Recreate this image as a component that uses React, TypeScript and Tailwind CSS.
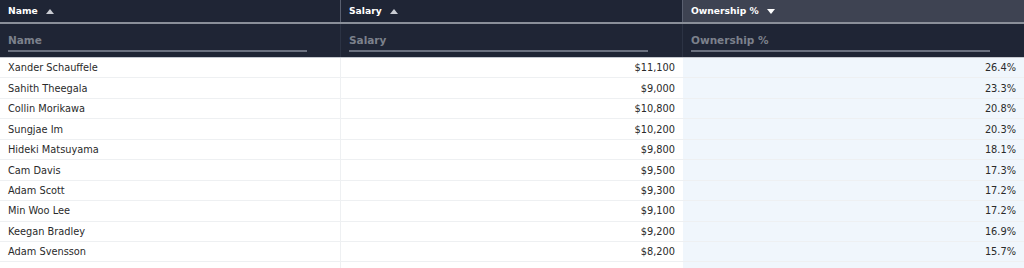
import React from "react";

const rows: [string, string, string][] = [
  ["Xander Schauffele", "$11,100", "26.4%"],
  ["Sahith Theegala", "$9,000", "23.3%"],
  ["Collin Morikawa", "$10,800", "20.8%"],
  ["Sungjae Im", "$10,200", "20.3%"],
  ["Hideki Matsuyama", "$9,800", "18.1%"],
  ["Cam Davis", "$9,500", "17.3%"],
  ["Adam Scott", "$9,300", "17.2%"],
  ["Min Woo Lee", "$9,100", "17.2%"],
  ["Keegan Bradley", "$9,200", "16.9%"],
  ["Adam Svensson", "$8,200", "15.7%"],
  ["", "", ""],
];

const Up = () => (
  <svg width="8" height="5" viewBox="0 0 8 5" className="ml-[8px]">
    <path d="M0 5 L4 0 L8 5 Z" fill="#c9ccd3" />
  </svg>
);
const Down = () => (
  <svg width="8" height="5" viewBox="0 0 8 5" className="ml-[8px]">
    <path d="M0 0 L4 5 L8 0 Z" fill="#ffffff" />
  </svg>
);

export default function App() {
  const font = { fontFamily: '"DejaVu Sans", Verdana, sans-serif' };
  return (
    <div className="w-[1024px] h-[268px] overflow-hidden bg-white" style={font}>
      <div className="grid grid-cols-[341px_342px_341px] bg-[#1f2535] h-[22px] border-b-2 border-[#8a8f99] box-content">
        <div className="flex items-center pl-[8px] text-[9.2px] font-bold text-white border-r border-[#5a6070]">
          Name <Up />
        </div>
        <div className="flex items-center pl-[8px] text-[9.2px] font-bold text-white border-r border-[#5a6070]">
          Salary <Up />
        </div>
        <div className="flex items-center pl-[8px] text-[9.2px] font-bold text-white bg-[#3e4352]">
          Ownership % <Down />
        </div>
      </div>
      <div className="grid grid-cols-[341px_342px_341px] bg-[#1f2535] h-[33px] border-b border-[#c5c8cf] box-content">
        {["Name", "Salary", "Ownership %"].map((t, i) => (
          <div key={t} className={`flex items-start pl-[8px] pt-[9px] ${i < 2 ? "border-r border-[#2c3344]" : ""}`}>
            <div className="w-[299px] h-[19px] border-b-2 border-[#6b7180] text-[10.5px] font-bold text-[#7c818c] leading-[14px]">
              {t}
            </div>
          </div>
        ))}
      </div>
      {rows.map((r, i) => (
        <div key={i} className="grid grid-cols-[341px_342px_341px] h-[20.45px] text-[9.8px] text-[#2a2a2a] border-b border-[#eef0f2]">
          <div className="flex items-center pl-[8px] pt-[2px] border-r border-[#eef0f2]">{r[0]}</div>
          <div className="flex items-center justify-end pr-[8px] pt-[2px]">{r[1]}</div>
          <div className="flex items-center justify-end pr-[8px] pt-[2px] bg-[#f0f6fc]">{r[2]}</div>
        </div>
      ))}
    </div>
  );
}
